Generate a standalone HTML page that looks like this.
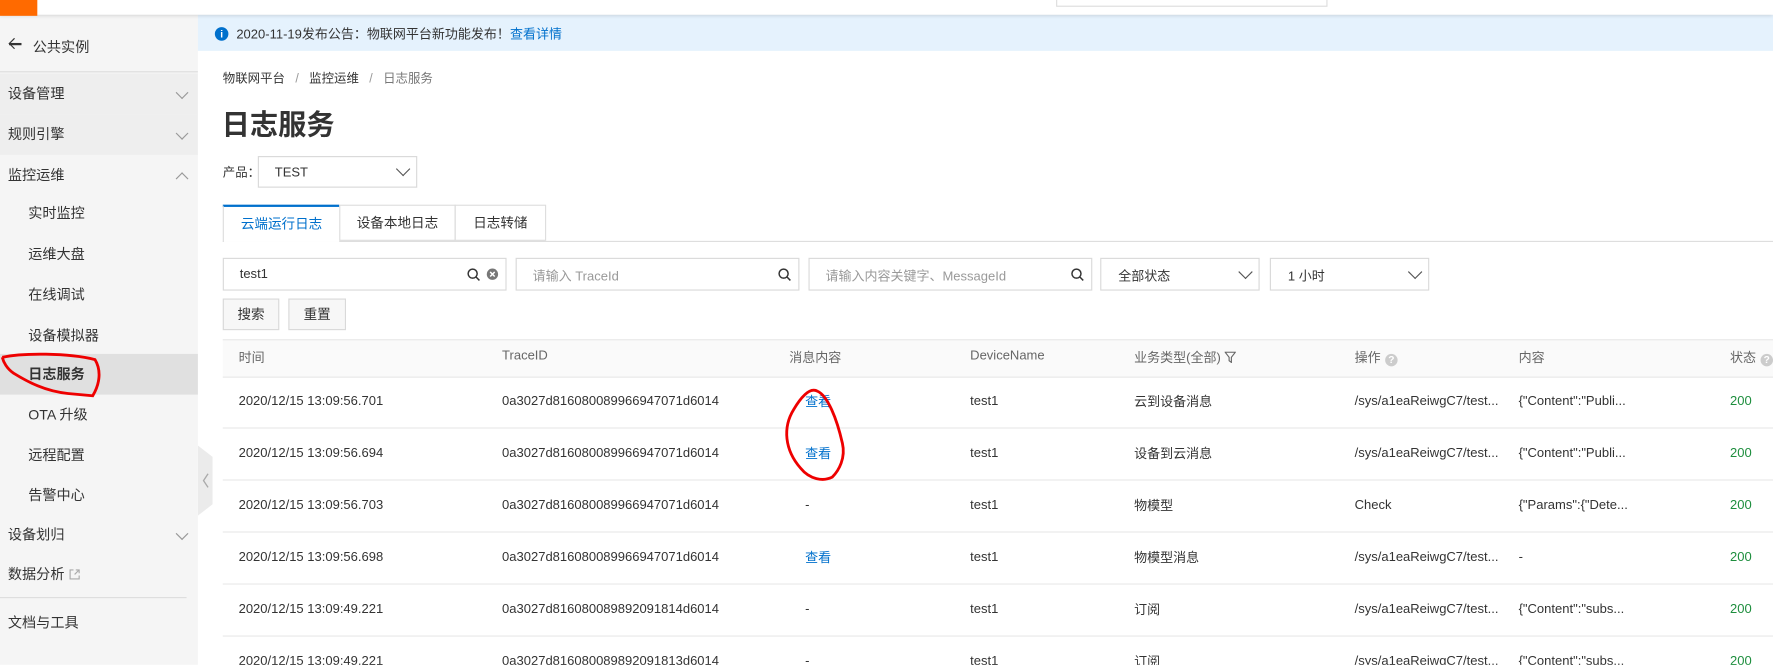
<!DOCTYPE html>
<html><head><meta charset="utf-8">
<style>
html,body{margin:0;padding:0;width:1773px;height:665px;overflow:hidden;background:#fff}
#w{position:absolute;left:0;top:0;width:1568px;height:588px;transform:scale(1.13074);transform-origin:0 0;font-family:"Liberation Sans","Noto Sans CJK SC",sans-serif;font-size:12px;color:#333;overflow:hidden}
.a{position:absolute;white-space:nowrap}
.sb{position:absolute;left:0;top:13px;width:175px;height:575px;background:#f5f5f5}
.it{position:absolute;left:0;width:175px;height:36px;line-height:36px;font-size:12.5px;color:#333}
.chev{position:absolute;right:10px;top:13px;width:7px;height:7px;border-right:1px solid #999;border-bottom:1px solid #999;transform:rotate(45deg)}
.box{position:absolute;border:1px solid #d9d9d9;background:#fff;box-sizing:border-box}
.dd{position:absolute;width:8px;height:8px;border-right:1.3px solid #555;border-bottom:1.3px solid #555;transform:rotate(45deg)}
.th{position:absolute;top:300px;left:197px;width:1371px;height:32px;background:#fafafa;border-top:1px solid #e8e8e8;border-bottom:1px solid #e8e8e8}
.row{position:absolute;left:197px;width:1371px;height:46px;border-bottom:1px solid #e8e8e8}
.c{position:absolute;top:17px;font-size:11.5px;color:#333;white-space:nowrap}
.row .cj{top:15px}
.th .cj{top:7px!important}
.q{display:inline-block;width:11px;height:11px;border-radius:50%;background:#ccc;color:#fff;font-size:9px;line-height:11px;text-align:center;vertical-align:-1px;margin-left:4px;font-weight:bold}
.lk{color:#0070cc}
.g{color:#1e8e3e}
</style></head><body><div id="w">
<div class="a" style="left:0;top:0;width:1568px;height:13px;background:#fff;box-shadow:0 1px 3px rgba(0,0,0,.12);z-index:2"></div>
<div class="a" style="left:0;top:0;width:33px;height:14px;background:#ff6a00;z-index:3"></div>
<div class="a" style="left:934px;top:-2px;width:238px;height:6px;border:1px solid #ddd;z-index:3"></div>
<div class="sb"></div>
<div class="a" style="left:8px;top:38px;width:11px;height:1.6px;background:#333"></div>
<div class="a" style="left:9px;top:34.5px;width:6px;height:6px;border-left:1.6px solid #333;border-bottom:1.6px solid #333;transform:rotate(45deg)"></div>
<div class="a" style="left:29px;top:31px;font-size:12.5px">公共实例</div>
<div class="a" style="left:0;top:63px;width:175px;height:1px;background:#ddd"></div>
<div class="it" style="top:65px;background:#eee"><span style="margin-left:7px">设备管理</span><i class="chev"></i></div>
<div class="it" style="top:101px;background:#eee"><span style="margin-left:7px">规则引擎</span><i class="chev"></i></div>
<div class="it" style="top:137px"><span style="margin-left:7px">监控运维</span><i class="chev" style="transform:rotate(225deg);top:17px"></i></div>
<div class="it" style="top:171px"><span style="margin-left:25px">实时监控</span></div>
<div class="it" style="top:207px"><span style="margin-left:25px">运维大盘</span></div>
<div class="it" style="top:243px"><span style="margin-left:25px">在线调试</span></div>
<div class="it" style="top:279px"><span style="margin-left:25px">设备模拟器</span></div>
<div class="it" style="top:313px;background:#e0e0e0;font-weight:bold"><span style="margin-left:25px">日志服务</span></div>
<div class="it" style="top:349px"><span style="margin-left:25px">OTA 升级</span></div>
<div class="it" style="top:385px"><span style="margin-left:25px">远程配置</span></div>
<div class="it" style="top:420px"><span style="margin-left:25px">告警中心</span></div>
<div class="it" style="top:455px"><span style="margin-left:7px">设备划归</span><i class="chev"></i></div>
<div class="it" style="top:490px"><span style="margin-left:7px">数据分析</span><svg width="10" height="10" style="margin-left:4px;vertical-align:-1px"><path d="M4 1H1V9H9V6M6 1H9V4M9 1L5 5" fill="none" stroke="#aaa"/></svg></div>
<div class="a" style="left:0;top:528px;width:165px;height:1px;background:#ddd"></div>
<div class="it" style="top:533px"><span style="margin-left:7px">文档与工具</span></div>
<svg class="a" style="left:175px;top:394px" width="14" height="62"><path d="M0 0 L13 10 L13 52 L0 62Z" fill="#ebebeb"/><path d="M9 25 L5 31 L9 37" stroke="#aaa" fill="none" stroke-width="1.2"/></svg>
<div class="a" style="left:175px;top:13px;width:1393px;height:32px;background:#e5f2fd"></div>
<div class="a" style="left:190px;top:24px;width:12px;height:12px;border-radius:50%;background:#0070cc;color:#fff;font-size:9px;line-height:12px;text-align:center;font-weight:bold">i</div>
<div class="a" style="left:209px;top:22px;font-size:11.5px">2020-11-19发布公告：物联网平台新功能发布！<span class="lk">查看详情</span></div>
<div class="a" style="left:197px;top:61px;font-size:11px;color:#333">物联网平台 &nbsp;&nbsp;<span style="color:#999">/</span>&nbsp;&nbsp; 监控运维 &nbsp;&nbsp;<span style="color:#999">/</span>&nbsp;&nbsp; <span style="color:#777">日志服务</span></div>
<div class="a" style="left:196px;top:91px;font-size:25px;font-weight:bold;color:#333">日志服务</div>
<div class="a" style="left:197px;top:144px;font-size:11px">产品：</div>
<div class="box" style="left:228px;top:138px;width:141px;height:28px"><span class="a" style="left:14px;top:8px;font-size:11.5px">TEST</span><i class="dd" style="left:123px;top:6px"></i></div>
<div class="a" style="left:197px;top:213px;width:1371px;height:1px;background:#ddd"></div>
<div class="a" style="left:197px;top:181px;width:103px;height:33px;background:#fff;border-top:2px solid #0070cc;box-sizing:border-box;border-left:1px solid #ddd;text-align:center;line-height:30px;color:#0070cc">云端运行日志</div>
<div class="a" style="left:300px;top:181px;width:103px;height:32px;border:1px solid #ddd;box-sizing:border-box;text-align:center;line-height:30px">设备本地日志</div>
<div class="a" style="left:402px;top:181px;width:81px;height:32px;border:1px solid #ddd;box-sizing:border-box;text-align:center;line-height:30px">日志转储</div>
<div class="box" style="left:197px;top:228px;width:251px;height:29px"><span class="a" style="left:14px;top:8px;font-size:11.5px">test1</span>
<svg class="a" style="left:215px;top:8px" width="12" height="12"><circle cx="5" cy="5" r="4" stroke="#333" stroke-width="1.3" fill="none"/><path d="M8 8 L11 11" stroke="#333" stroke-width="1.3"/></svg>
<svg class="a" style="left:232px;top:8px" width="11" height="11"><circle cx="5.5" cy="5.5" r="5" fill="#777"/><path d="M3.5 3.5L7.5 7.5M7.5 3.5L3.5 7.5" stroke="#fff" stroke-width="1.3"/></svg></div>
<div class="box" style="left:456px;top:228px;width:251px;height:29px"><span class="a" style="left:14px;top:7px;font-size:11.5px;color:#999">请输入 TraceId</span>
<svg class="a" style="left:231px;top:8px" width="12" height="12"><circle cx="5" cy="5" r="4" stroke="#333" stroke-width="1.3" fill="none"/><path d="M8 8 L11 11" stroke="#333" stroke-width="1.3"/></svg></div>
<div class="box" style="left:715px;top:228px;width:251px;height:29px"><span class="a" style="left:14px;top:7px;font-size:11.5px;color:#999">请输入内容关键字、MessageId</span>
<svg class="a" style="left:231px;top:8px" width="12" height="12"><circle cx="5" cy="5" r="4" stroke="#333" stroke-width="1.3" fill="none"/><path d="M8 8 L11 11" stroke="#333" stroke-width="1.3"/></svg></div>
<div class="box" style="left:973px;top:228px;width:141px;height:29px"><span class="a" style="left:15px;top:7px;font-size:11.5px">全部状态</span><i class="dd" style="left:123px;top:7px"></i></div>
<div class="box" style="left:1123px;top:228px;width:141px;height:29px"><span class="a" style="left:15px;top:7px;font-size:11.5px">1 小时</span><i class="dd" style="left:123px;top:7px"></i></div>
<div class="box" style="left:197px;top:264px;width:50px;height:28px;background:#f7f7f7;text-align:center;line-height:26px">搜索</div>
<div class="box" style="left:255px;top:264px;width:51px;height:28px;background:#f7f7f7;text-align:center;line-height:26px">重置</div>
<div class="th">
<span class="c cj" style="left:14px;color:#666">时间</span>
<span class="c" style="left:247px;top:8px;color:#666">TraceID</span>
<span class="c cj" style="left:501px;color:#666">消息内容</span>
<span class="c" style="left:661px;top:8px;color:#666">DeviceName</span>
<span class="c cj" style="left:806px;color:#666">业务类型(全部) <svg width="10" height="10" style="vertical-align:-1px"><path d="M0.5 0.5H9.5L6 5V9.5L4 8V5Z" fill="none" stroke="#666"/></svg></span>
<span class="c cj" style="left:1001px;color:#666">操作<span class="q">?</span></span>
<span class="c cj" style="left:1146px;color:#666">内容</span>
<span class="c cj" style="left:1333px;color:#666">状态<span class="q">?</span></span>
</div>
<div class="row" style="top:332px"><span class="c" style="left:14px">2020/12/15 13:09:56.701</span><span class="c" style="left:247px">0a3027d816080089966947071d6014</span><span class="c lk cj" style="left:515px">查看</span><span class="c" style="left:661px">test1</span><span class="c cj" style="left:806px">云到设备消息</span><span class="c" style="left:1001px">/sys/a1eaReiwgC7/test...</span><span class="c" style="left:1146px">{"Content":"Publi...</span><span class="c g" style="left:1333px">200</span></div>
<div class="row" style="top:378px"><span class="c" style="left:14px">2020/12/15 13:09:56.694</span><span class="c" style="left:247px">0a3027d816080089966947071d6014</span><span class="c lk cj" style="left:515px">查看</span><span class="c" style="left:661px">test1</span><span class="c cj" style="left:806px">设备到云消息</span><span class="c" style="left:1001px">/sys/a1eaReiwgC7/test...</span><span class="c" style="left:1146px">{"Content":"Publi...</span><span class="c g" style="left:1333px">200</span></div>
<div class="row" style="top:424px"><span class="c" style="left:14px">2020/12/15 13:09:56.703</span><span class="c" style="left:247px">0a3027d816080089966947071d6014</span><span class="c" style="left:515px">-</span><span class="c" style="left:661px">test1</span><span class="c cj" style="left:806px">物模型</span><span class="c" style="left:1001px">Check</span><span class="c" style="left:1146px">{"Params":{"Dete...</span><span class="c g" style="left:1333px">200</span></div>
<div class="row" style="top:470px"><span class="c" style="left:14px">2020/12/15 13:09:56.698</span><span class="c" style="left:247px">0a3027d816080089966947071d6014</span><span class="c lk cj" style="left:515px">查看</span><span class="c" style="left:661px">test1</span><span class="c cj" style="left:806px">物模型消息</span><span class="c" style="left:1001px">/sys/a1eaReiwgC7/test...</span><span class="c" style="left:1146px">-</span><span class="c g" style="left:1333px">200</span></div>
<div class="row" style="top:516px"><span class="c" style="left:14px">2020/12/15 13:09:49.221</span><span class="c" style="left:247px">0a3027d816080089892091814d6014</span><span class="c" style="left:515px">-</span><span class="c" style="left:661px">test1</span><span class="c cj" style="left:806px">订阅</span><span class="c" style="left:1001px">/sys/a1eaReiwgC7/test...</span><span class="c" style="left:1146px">{"Content":"subs...</span><span class="c g" style="left:1333px">200</span></div>
<div class="row" style="top:562px"><span class="c" style="left:14px">2020/12/15 13:09:49.221</span><span class="c" style="left:247px">0a3027d816080089892091813d6014</span><span class="c" style="left:515px">-</span><span class="c" style="left:661px">test1</span><span class="c cj" style="left:806px">订阅</span><span class="c" style="left:1001px">/sys/a1eaReiwgC7/test...</span><span class="c" style="left:1146px">{"Content":"subs...</span><span class="c g" style="left:1333px">200</span></div>
<svg class="a" style="left:0;top:0" width="1568" height="588">
<path d="M2 316 C20 312 60 312 84 318 C90 328 88 340 82 350 L60 348 C40 346 25 338 12 330 C6 326 3 320 2 316" fill="none" stroke="#e00" stroke-width="2.5"/>
<path d="M723 346 C732 350 740 370 745 392 C748 405 742 416 736 422 C728 426 716 424 708 414 C694 398 692 378 702 362 C708 352 716 342 723 346" fill="none" stroke="#e00" stroke-width="2.5"/>
</svg>
</div></body></html>
